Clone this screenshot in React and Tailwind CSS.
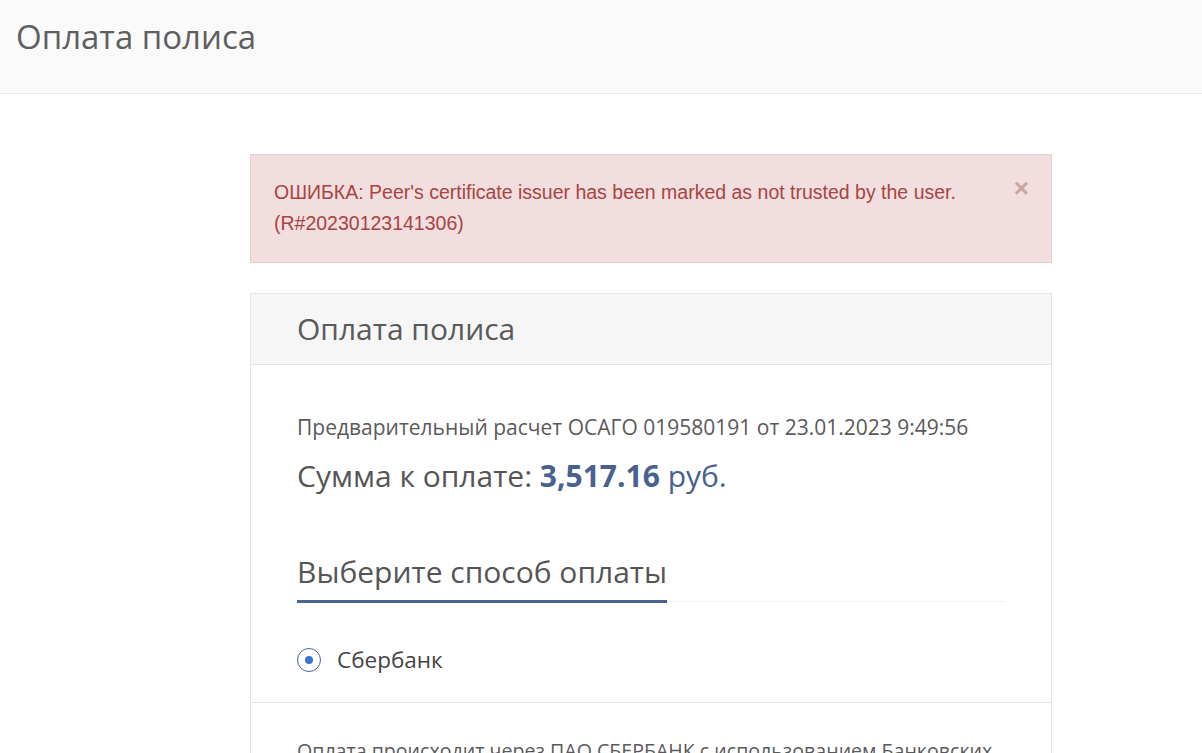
export default function App() {
  return (
    <div className="min-h-screen bg-white font-['Open_Sans',sans-serif] text-[#555]">
      {/* Page header */}
      <div className="h-[94px] bg-[#fafafa] border-b border-[#eaeaea] px-4 pt-[16px]">
        <h1 className="text-[33px] leading-[42px] text-[#5f5f5f]">Оплата полиса</h1>
      </div>

      <div className="ml-[250px] w-[802px] pt-[60px]">
        {/* Error alert */}
        <div className="relative bg-[#f2dede] border border-[#ebccd1] px-[23px] pt-[22px] pb-[23px] text-[#a94442] font-['Liberation_Sans',Arial,sans-serif] text-[19.5px] leading-[31px]">
          <button className="absolute right-[22px] top-[20px] text-[#caa3a3] text-[26px] leading-[26px] font-bold">×</button>
          <p className="whitespace-nowrap">
            ОШИБКА: Peer's certificate issuer has been marked as not trusted by the user.
          </p>
          <p>(R#20230123141306)</p>
        </div>

        {/* Panel */}
        <div className="mt-[30px] border border-[#e5e5e5]">
          <div className="h-[71px] bg-[#f6f6f6] border-b border-[#e2e2e2] pl-[46px] flex items-center">
            <h2 className="text-[30px] leading-[38px] text-[#5a5a5a]">Оплата полиса</h2>
          </div>

          <div className="px-[46px] pt-[46px] pb-[27px]">
            <p className="text-[21px] leading-[32px] text-[#5a5a5a]">
              Предварительный расчет ОСАГО 019580191 от 23.01.2023 9:49:56
            </p>
            <p className="mt-[14px] text-[30px] leading-[38px] text-[#555]">
              Сумма к оплате: <span className="font-bold text-[#48618f]">3,517.16</span>{' '}
              <span className="text-[#48618f]">руб.</span>
            </p>

            <div className="mt-[58px] flex items-end">
              <div className="border-b-[3px] border-[#4a6491] pb-[9px]">
                <h3 className="text-[30px] leading-[38px] text-[#555] whitespace-nowrap">Выберите способ оплаты</h3>
              </div>
              <div className="flex-1 border-b border-dotted border-[#e6e6e6] mb-[1px]" />
            </div>

            <label className="mt-[42px] flex items-center gap-[16px]">
              <span className="w-[24px] h-[24px] rounded-full border border-[#4a6491] flex items-center justify-center">
                <span className="w-[8px] h-[8px] rounded-full bg-[#3a74d1]" />
              </span>
              <span className="text-[22.5px] leading-[30px] text-[#444]">Сбербанк</span>
            </label>
          </div>

          <div className="border-t border-[#e5e5e5] pl-[46px] pr-[36px] pt-[32px] pb-6">
            <p className="text-[19.6px] leading-[32px] text-[#5a5a5a]">
              Оплата происходит через ПАО СБЕРБАНК с использованием Банковских карт следующих платёжных систем
            </p>
          </div>
        </div>
      </div>
    </div>
  );
}
